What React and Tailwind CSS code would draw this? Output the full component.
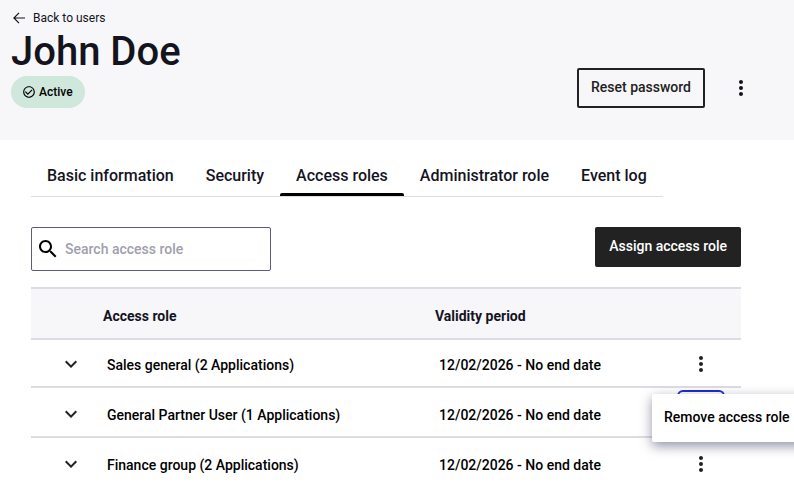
import { useState } from 'react';

const tabs = ['Basic information', 'Security', 'Access roles', 'Administrator role', 'Event log'];

const roles = [
  { id: 1, name: 'Sales general (2 Applications)', validity: '12/02/2026 - No end date' },
  { id: 2, name: 'General Partner User (1 Applications)', validity: '12/02/2026 - No end date' },
  { id: 3, name: 'Finance group (2 Applications)', validity: '12/02/2026 - No end date' },
];

const ArrowLeftIcon = () => (
  <svg viewBox="0 0 12 12" className="h-3 w-3" fill="none" stroke="currentColor" strokeWidth="1.2">
    <path d="M12 6H1M6 .8L.9 6 6 11.2" />
  </svg>
);

const CheckCircleIcon = () => (
  <svg viewBox="0 0 24 24" className="h-[14px] w-[14px]" fill="currentColor">
    <path d="M16.59 7.58 10 14.17l-3.59-3.58L5 12l5 5 8-8zM12 2C6.48 2 2 6.48 2 12s4.48 10 10 10 10-4.48 10-10S17.52 2 12 2m0 18c-4.42 0-8-3.58-8-8s3.58-8 8-8 8 3.58 8 8-3.58 8-8 8" />
  </svg>
);

const SearchIcon = () => (
  <svg viewBox="0 0 24 24" className="h-6 w-6 shrink-0" fill="currentColor">
    <path d="M15.5 14h-.79l-.28-.27C15.41 12.59 16 11.11 16 9.5 16 5.91 13.09 3 9.5 3S3 5.91 3 9.5 5.91 16 9.5 16c1.61 0 3.09-.59 4.23-1.57l.27.28v.79l5 4.99L20.49 19zm-6 0C7.01 14 5 11.99 5 9.5S7.01 5 9.5 5 14 7.01 14 9.5 11.99 14 9.5 14" />
  </svg>
);

const ChevronDownIcon = () => (
  <svg viewBox="0 0 24 24" className="h-6 w-6" fill="currentColor">
    <path d="M7.41 8.59 12 13.17l4.59-4.58L18 10l-6 6-6-6z" />
  </svg>
);

const KebabIcon = () => (
  <svg viewBox="0 0 24 24" className="h-6 w-6" fill="currentColor">
    <path d="M12 8c1.1 0 2-.9 2-2s-.9-2-2-2-2 .9-2 2 .9 2 2 2m0 2c-1.1 0-2 .9-2 2s.9 2 2 2 2-.9 2-2-.9-2-2-2m0 6c-1.1 0-2 .9-2 2s.9 2 2 2 2-.9 2-2-.9-2-2-2" />
  </svg>
);

const UserHeader = () => (
  <header className="flex h-[140px] items-start justify-between bg-[#f7f7f9] pl-[11px] pr-[29px]">
    <div className="flex flex-col items-start">
      <a href="#users" className="mt-2 ml-[2px] flex items-center gap-2 text-xs leading-5">
        <ArrowLeftIcon />
        Back to users
      </a>
      <h1 className="text-[40px] leading-[48px] font-medium">John Doe</h1>
      <span className="flex h-8 items-center gap-[3px] rounded-full bg-[#d0e7db] pr-3 pl-[11px] text-xs font-medium text-black">
        <CheckCircleIcon />
        Active
      </span>
    </div>
    <div className="mt-16 flex items-center gap-3">
      <button type="button" className="h-10 rounded-xs border-2 border-[#222] px-3 pb-[2px] text-sm font-medium text-[#222]">
        Reset password
      </button>
      <button type="button" aria-label="User actions" className="flex h-12 w-12 items-center justify-center">
        <KebabIcon />
      </button>
    </div>
  </header>
);

const RoleRow = ({ role, first, last, menuOpen, onToggleMenu }) => {
  const cell = `border-b-2 p-0 align-bottom ${last ? 'border-transparent' : 'border-[#dcdce6]'}`;

  return (
    <tr className={first ? 'h-12' : 'h-[50px]'}>
      <td className={cell}>
        <div className="-mb-[2px] flex h-12 items-center pl-7">
          <button type="button" aria-label={`Expand ${role.name}`} className="text-[#222]">
            <ChevronDownIcon />
          </button>
        </div>
      </td>
      <td className={cell}>
        <div className="-mb-[2px] flex h-12 items-center pt-[2px] pl-1">{role.name}</div>
      </td>
      <td className={cell}>
        <div className="-mb-[2px] flex h-12 items-center pt-[2px] pl-1">{role.validity}</div>
      </td>
      <td className={cell}>
        <div className="relative -mb-[2px] h-12 w-12">
          <button
            type="button"
            aria-label={`Actions for ${role.name}`}
            onClick={onToggleMenu}
            className={`flex h-12 w-12 items-center justify-center rounded-md border-2 text-[#222] ${
              menuOpen ? 'border-[#1f2bd0]' : 'border-transparent'
            }`}
          >
            <KebabIcon />
          </button>
          {menuOpen && (
            <div className="absolute top-1 -left-[25px] z-10 rounded-xs bg-white shadow-[0_4px_12px_rgba(40,40,80,0.5)]">
              <button type="button" className="h-12 w-40 pb-[2px] pl-3 text-left whitespace-nowrap">
                Remove access role
              </button>
            </div>
          )}
        </div>
      </td>
    </tr>
  );
};

const App = () => {
  const [activeTab, setActiveTab] = useState('Access roles');
  const [openMenu, setOpenMenu] = useState(2);
  const [search, setSearch] = useState('');

  return (
    <div className="min-h-screen overflow-hidden bg-white font-[Roboto,sans-serif] text-[#14141f]">
      <UserHeader />

      <main className="pr-[53px] pl-[31px]">
        {/* Tabs */}
        <nav className="mt-4 flex w-fit border-b border-[#dcdce6]">
          {tabs.map((tab) => (
            <button
              key={tab}
              type="button"
              onClick={() => setActiveTab(tab)}
              className={`relative h-10 px-4 text-base font-medium whitespace-nowrap ${
                tab === activeTab
                  ? 'after:absolute after:inset-x-0 after:bottom-0 after:h-[3px] after:rounded-t-xs after:bg-black'
                  : ''
              }`}
            >
              {tab}
            </button>
          ))}
        </nav>

        {/* Toolbar */}
        <div className="mt-[30px] flex items-start justify-between">
          <label className="flex h-11 w-60 items-center gap-[5px] rounded-xs border border-[#5c5c80] pl-1 text-black">
            <SearchIcon />
            <input
              type="text"
              aria-label="Search access role"
              placeholder="Search access role"
              value={search}
              onChange={(e) => setSearch(e.target.value)}
              className="w-full text-sm font-medium outline-none placeholder:text-[#a0a0b0]"
            />
          </label>
          <button type="button" className="h-10 rounded-xs bg-[#222] px-[14px] pb-[2px] text-sm font-medium text-white">
            Assign access role
          </button>
        </div>

        {/* Roles */}
        <table className="mt-4 w-full table-fixed border-separate border-spacing-0 text-sm font-medium text-black">
          <thead>
            <tr className="h-[53px] bg-[#f7f7f9] text-left text-[#14141f]">
              <th className="w-[72px] border-y-2 border-[#dcdce6] p-0"></th>
              <th className="border-y-2 border-[#dcdce6] p-0 pt-1 font-bold">Access role</th>
              <th className="w-[242px] border-y-2 border-[#dcdce6] p-0 pt-1 font-bold">Validity period</th>
              <th className="w-16 border-y-2 border-[#dcdce6] p-0"></th>
            </tr>
          </thead>
          <tbody>
            {roles.map((role, i) => (
              <RoleRow
                key={role.id}
                role={role}
                first={i === 0}
                last={i === roles.length - 1}
                menuOpen={openMenu === role.id}
                onToggleMenu={() => setOpenMenu(openMenu === role.id ? null : role.id)}
              />
            ))}
          </tbody>
        </table>
      </main>
    </div>
  );
};

export default App;
